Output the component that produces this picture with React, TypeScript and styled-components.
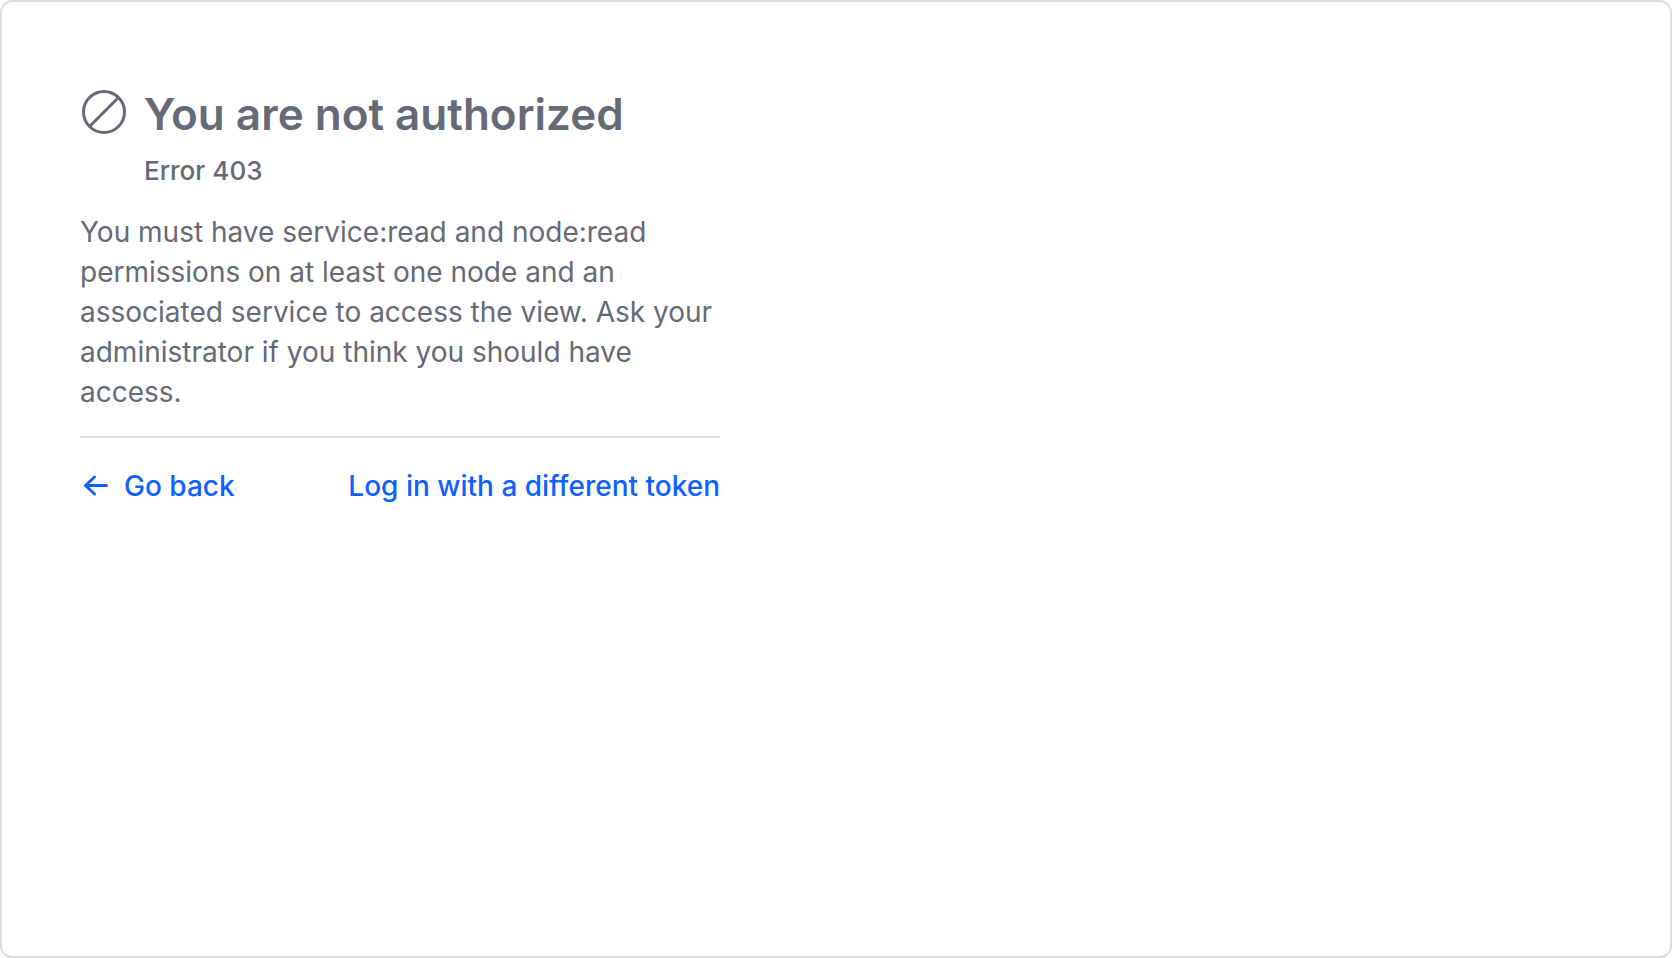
import React from 'react';
import styled, { createGlobalStyle } from 'styled-components';

const GlobalStyle = createGlobalStyle`
  *, *::before, *::after { box-sizing: border-box; }
  body {
    margin: 0;
    background: #fff;
    font-family: Inter, "Liberation Sans", sans-serif;
    font-variant-ligatures: none;
    color: #656a76;
  }
`;

const Frame = styled.main`
  min-height: 100vh;
  padding: 78px;
  border: 2px solid #dedfe3;
  border-radius: 12px;
  background: #fff;
`;

const ErrorState = styled.section`
  width: 100%;
  max-width: 640px;
`;

const Header = styled.header`
  display: grid;
  grid-template-columns: 48px 1fr;
  column-gap: 16px;
  align-items: start;
`;

const HeaderIcon = styled.svg`
  width: 48px;
  height: 48px;
  margin-top: 8px;
`;

const Title = styled.h1`
  margin: 0;
  font-size: 44px;
  line-height: 68px;
  font-weight: 600;
`;

const ErrorCode = styled.p`
  grid-column: 2;
  margin: 4px 0 0;
  font-size: 26px;
  line-height: 38px;
  font-weight: 500;
`;

const Message = styled.p`
  margin: 22px 0 24px;
  font-size: 28px;
  line-height: 40px;
`;

const Footer = styled.footer`
  display: flex;
  justify-content: space-between;
  padding-top: 28px;
  border-top: 2px solid #dedfe3;
`;

const ActionLink = styled.a`
  display: inline-flex;
  align-items: center;
  gap: 12px;
  color: #1060ff;
  font-size: 28px;
  line-height: 40px;
  font-weight: 500;
  text-decoration: none;
`;

const SkipIcon = () => (
  <HeaderIcon viewBox="0 0 24 24" fill="none" stroke="currentColor" strokeWidth="1.5" aria-hidden="true">
    <circle cx="12" cy="12" r="10.25" />
    <path d="M19.25 4.75L4.75 19.25" />
  </HeaderIcon>
);

const ArrowLeftIcon = () => (
  <svg width="32" height="32" viewBox="0 0 16 16" fill="none" stroke="currentColor" strokeWidth="1.5" strokeLinecap="round" strokeLinejoin="round" aria-hidden="true">
    <path d="M13.25 7.75H2.75M7.25 3.5L2.75 7.75L7.25 12" />
  </svg>
);

export default function App() {
  return (
    <>
      <GlobalStyle />
      <Frame>
        <ErrorState>
          <Header>
            <SkipIcon />
            <Title>You are not authorized</Title>
            <ErrorCode>Error 403</ErrorCode>
          </Header>
          <Message>
            You must have service:read and node:read permissions on at least one node and an
            associated service to access the view. Ask your administrator if you think you should
            have access.
          </Message>
          <Footer>
            <ActionLink href="#back">
              <ArrowLeftIcon />
              Go back
            </ActionLink>
            <ActionLink href="#login">Log in with a different token</ActionLink>
          </Footer>
        </ErrorState>
      </Frame>
    </>
  );
}
